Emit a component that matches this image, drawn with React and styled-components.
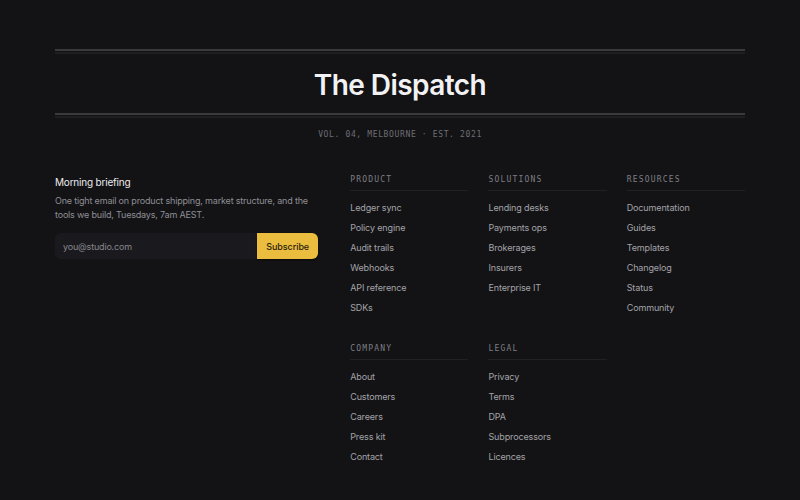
import React from "react";
import styled, { createGlobalStyle } from "styled-components";

const GlobalStyle = createGlobalStyle`
  html, body {
    margin: 0;
    padding: 0;
    background: #131316;
  }
  body {
    font-family: Inter, "Noto Sans", sans-serif;
    -webkit-font-smoothing: antialiased;
  }
  * { box-sizing: border-box; }
`;

const Page = styled.footer`
  width: 800px;
  min-height: 500px;
  padding: 49px 55px 40px;
  background: #131316;
  color: #e9e9eb;
`;

const Masthead = styled.header`
  display: flex;
  flex-direction: column;
  align-items: stretch;
`;

const Rule = styled.div`
  height: 2px;
  background: #3a3a3e;
  box-shadow: 0 3px 0 #1e1e22;
`;

const Title = styled.h1`
  margin: 17px 0 11px;
  text-align: center;
  font-size: 28px;
  line-height: 34px;
  font-weight: 600;
  letter-spacing: -0.02em;
  color: #f2f2f4;
`;

const Dateline = styled.p`
  margin: 14px 0 0;
  text-align: center;
  font-family: "DejaVu Sans Mono", "Liberation Mono", monospace;
  font-size: 8px;
  line-height: 12px;
  letter-spacing: 0.08em;
  color: #6e6e74;
`;

const Main = styled.div`
  display: grid;
  grid-template-columns: 2fr 3fr;
  column-gap: 32px;
  margin-top: 32px;
`;

const Briefing = styled.section`
  display: flex;
  flex-direction: column;
`;

const BriefingTitle = styled.h2`
  margin: 0;
  font-size: 10px;
  line-height: 18px;
  font-weight: 400;
  letter-spacing: -0.02em;
  color: #ececee;
`;

const BriefingText = styled.p`
  margin: 3px 0 0;
  font-size: 9px;
  line-height: 14px;
  letter-spacing: -0.02em;
  color: #8e8e94;
`;

const SignupForm = styled.form`
  display: flex;
  margin-top: 11px;
  height: 26px;
`;

const EmailInput = styled.input`
  flex: 1;
  min-width: 0;
  height: 100%;
  border: none;
  outline: none;
  border-radius: 6px 0 0 6px;
  padding: 0 8px;
  background: #1a1a1e;
  font-family: inherit;
  font-size: 9px;
  letter-spacing: -0.02em;
  color: #e9e9eb;
  &::placeholder { color: #86868c; }
`;

const SubscribeButton = styled.button`
  width: 61px;
  height: 100%;
  border: none;
  border-radius: 0 6px 6px 0;
  background: #ebbd3e;
  color: #2a220e;
  font-family: inherit;
  font-size: 9px;
  font-weight: 500;
  letter-spacing: -0.01em;
  cursor: pointer;
  box-shadow: 0 1px 2px rgba(0, 0, 0, 0.5);
`;

const LinkGrid = styled.nav`
  display: grid;
  grid-template-columns: repeat(3, 1fr);
  column-gap: 20px;
  row-gap: 24px;
  align-items: start;
`;

const Column = styled.div`
  display: flex;
  flex-direction: column;
`;

const ColumnHeading = styled.h3`
  margin: 0;
  padding-bottom: 3px;
  border-bottom: 1px solid #212125;
  font-family: "DejaVu Sans Mono", "Liberation Mono", monospace;
  font-size: 8px;
  line-height: 14px;
  font-weight: 400;
  letter-spacing: 0.15em;
  color: #7e7e84;
`;

const LinkList = styled.ul`
  list-style: none;
  margin: 7px 0 0;
  padding: 0;
`;

const LinkItem = styled.li`
  font-size: 9px;
  line-height: 20px;
  letter-spacing: -0.015em;
  color: #a3a3a8;
`;

const columns = [
  { title: "Product", links: ["Ledger sync", "Policy engine", "Audit trails", "Webhooks", "API reference", "SDKs"] },
  { title: "Solutions", links: ["Lending desks", "Payments ops", "Brokerages", "Insurers", "Enterprise IT"] },
  { title: "Resources", links: ["Documentation", "Guides", "Templates", "Changelog", "Status", "Community"] },
  { title: "Company", links: ["About", "Customers", "Careers", "Press kit", "Contact"] },
  { title: "Legal", links: ["Privacy", "Terms", "DPA", "Subprocessors", "Licences"] },
];

export default function App() {
  return (
    <>
      <GlobalStyle />
      <Page>
        <Masthead>
          <Rule />
          <Title>The Dispatch</Title>
          <Rule />
          <Dateline>VOL. 04, MELBOURNE · EST. 2021</Dateline>
        </Masthead>
        <Main>
          <Briefing>
            <BriefingTitle>Morning briefing</BriefingTitle>
            <BriefingText>
              One tight email on product shipping, market structure, and the tools we build, Tuesdays, 7am AEST.
            </BriefingText>
            <SignupForm onSubmit={(e) => e.preventDefault()}>
              <EmailInput type="email" placeholder="you@studio.com" />
              <SubscribeButton type="submit">Subscribe</SubscribeButton>
            </SignupForm>
          </Briefing>
          <LinkGrid>
            {columns.map((col) => (
              <Column key={col.title}>
                <ColumnHeading>{col.title.toUpperCase()}</ColumnHeading>
                <LinkList>
                  {col.links.map((l) => (
                    <LinkItem key={l}>{l}</LinkItem>
                  ))}
                </LinkList>
              </Column>
            ))}
          </LinkGrid>
        </Main>
      </Page>
    </>
  );
}
